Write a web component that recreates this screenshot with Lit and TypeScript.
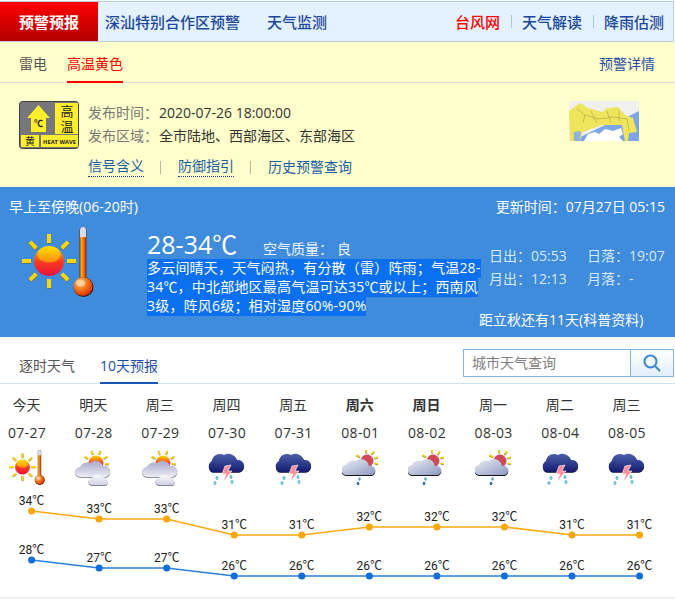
import { LitElement, html, css, svg } from 'lit';
import { customElement } from 'lit/decorators.js';

type Day = { week: string; date: string; icon: 'sun' | 'partly' | 'storm' | 'shower'; high: number; low: number; weekend?: boolean };

const days: Day[] = [
  { week: '今天', date: '07-27', icon: 'sun', high: 34, low: 28 },
  { week: '明天', date: '07-28', icon: 'partly', high: 33, low: 27 },
  { week: '周三', date: '07-29', icon: 'partly', high: 33, low: 27 },
  { week: '周四', date: '07-30', icon: 'storm', high: 31, low: 26 },
  { week: '周五', date: '07-31', icon: 'storm', high: 31, low: 26 },
  { week: '周六', date: '08-01', icon: 'shower', high: 32, low: 26, weekend: true },
  { week: '周日', date: '08-02', icon: 'shower', high: 32, low: 26, weekend: true },
  { week: '周一', date: '08-03', icon: 'shower', high: 32, low: 26 },
  { week: '周二', date: '08-04', icon: 'storm', high: 31, low: 26 },
  { week: '周三', date: '08-05', icon: 'storm', high: 31, low: 26 },
];

const rays = (cx: number, cy: number, r1: number, r2: number, w: number, angles: number[]) =>
  angles.map(a => {
    const t = (a * Math.PI) / 180;
    return svg`
      <line x1=${cx + Math.cos(t) * r1} y1=${cy + Math.sin(t) * r1 + 0.5} x2=${cx + Math.cos(t) * r2} y2=${cy + Math.sin(t) * r2 + 0.5} stroke="#6b5a10" stroke-width=${w} />
      <line x1=${cx + Math.cos(t) * r1} y1=${cy + Math.sin(t) * r1} x2=${cx + Math.cos(t) * r2} y2=${cy + Math.sin(t) * r2} stroke="#ffd60a" stroke-width=${w} />`;
  });

const sunThermo = (size: number) => html`
  <svg class="icon" width=${size} height=${size} viewBox="0 0 72 72">
    ${rays(27, 34, 18, 27, 4, [0, 45, 90, 135, 180, 225, 270, 315])}
    <circle cx="27" cy="34" r="15" fill="url(#sunFill)" />
    <ellipse cx="27" cy="27.500" rx="11.500" ry="8" fill="url(#sunGlow)" />
    <rect x="57.5" y="0" width="7" height="54" rx="3.5" fill="#5b3a12" />
    <rect x="58" y="0" width="6" height="12" rx="3" fill="#d9dcec" />
    <rect x="58.5" y="10" width="5" height="44" fill="url(#tubeFill)" />
    <circle cx="61.5" cy="60" r="10" fill="#3a1c05" />
    <circle cx="61" cy="59.5" r="9.5" fill="url(#bulbFill)" />
    <ellipse cx="58.5" cy="56" rx="4.5" ry="3.5" fill="#ffd9a8" opacity=".8" />
  </svg>`;

const partly = () => html`
  <svg class="icon" width="36" height="36" viewBox="0 0 36 36">
    ${rays(21, 13, 9, 13, 1.6, [-150, -110, -70, -30, 5])}
    <circle cx="21" cy="13" r="7.5" fill="url(#sunFill)" />
    <path d="M5 27a5 5 0 0 1 0-10a8 8 0 0 1 10-4a8 8 0 0 1 13 3a5.500 5.500 0 0 1 3 11z" fill="#6d6d80" transform="translate(0 .8)" />
    <path d="M5 27a5 5 0 0 1 0-10a8 8 0 0 1 10-4a8 8 0 0 1 13 3a5.500 5.500 0 0 1 3 11z" fill="url(#cloudFill)" />
    <path d="M17 35a3.500 3.500 0 0 1 0-7a6 6 0 0 1 10-1a5 5 0 0 1 5 3.500a3 3 0 0 1-1 4.500z" fill="#5d5d70" transform="translate(0 .8)" />
    <path d="M17 35a3.500 3.500 0 0 1 0-7a6 6 0 0 1 10-1a5 5 0 0 1 5 3.500a3 3 0 0 1-1 4.500z" fill="url(#smallCloud)" />
  </svg>`;

const storm = () => html`
  <svg class="icon" width="38" height="36" viewBox="0 0 38 36">
    <path d="M6 22a6 6 0 0 1-1-11a8 8 0 0 1 12-6a9 9 0 0 1 13 5a6 6 0 0 1 2 12z" fill="#070b33" transform="translate(0 .8)" />
    <path d="M6 22a6 6 0 0 1-1-11a8 8 0 0 1 12-6a9 9 0 0 1 13 5a6 6 0 0 1 2 12z" fill="url(#stormFill)" />
    <path d="M18 16l6-1l-3 6h4l-9 11l3-8h-4z" fill="#ff8f9a" stroke="#fff" stroke-width=".6" />
    <g fill="#6cc0d8">
      <ellipse cx="10" cy="28" rx="1.500" ry="2" /><ellipse cx="8" cy="33" rx="1.500" ry="2" />
      <ellipse cx="24" cy="27" rx="1.500" ry="2" /><ellipse cx="25" cy="32" rx="1.500" ry="2" />
    </g>
  </svg>`;

const shower = () => html`
  <svg class="icon" width="36" height="36" viewBox="0 0 36 36">
    ${rays(25, 11, 8, 12, 1.6, [-150, -95, -55, -20, 15])}
    <circle cx="25" cy="11" r="6.500" fill="#cf4a58" />
    <path d="M5 25a5 5 0 0 1-1-10a8 8 0 0 1 10-4a8 8 0 0 1 13 5a4.500 4.500 0 0 1 3 9z" fill="#15151f" transform="translate(0 1)" />
    <path d="M5 25a5 5 0 0 1-1-10a8 8 0 0 1 10-4a8 8 0 0 1 13 5a4.500 4.500 0 0 1 3 9z" fill="url(#showerFill)" />
    <ellipse cx="17.500" cy="29" rx="1.300" ry="1.800" fill="#5aa8c8" /><ellipse cx="16" cy="33.500" rx="1.300" ry="1.800" fill="#2d6e92" />
  </svg>`;

const dayIcon = (d: Day) => {
  if (d.icon === 'sun') return sunThermo(36);
  if (d.icon === 'partly') return partly();
  if (d.icon === 'storm') return storm();
  return shower();
};

@customElement('app-root')
export class AppRoot extends LitElement {
  static styles = css`
    :host {
      display: block;
      width: 675px;
      height: 599px;
      overflow: hidden;
      background: #fff;
      font-family: "Open Sans", "Noto Sans CJK SC", sans-serif;
      font-size: 14px;
      color: #333;
    }
    .defs { display: block; width: 0; height: 0; }
    .icon { display: block; }

    .topbar {
      display: flex;
      align-items: center;
      height: 39px;
      margin-top: 1px;
      margin-right: 1px;
      border: 1px solid #b9cde6;
      border-left: 0;
      background: #e4f2ff;
      font-size: 15px;
      font-weight: 500;
      color: #1b479c;
    }
    .topbar .brand {
      width: 98px;
      align-self: stretch;
      display: flex;
      align-items: center;
      justify-content: center;
      color: #fff;
      font-weight: 700;
      background: linear-gradient(#ff0000, #b30000);
    }
    .topbar .left { margin-left: 7px; display: flex; gap: 27px; }
    .topbar .right { margin-left: auto; margin-right: 9px; display: flex; align-items: center; }
    .topbar .red { color: #ff0000; }
    .topbar .sep { width: 1px; height: 13px; background: #a9c4e2; margin: 0 10px 0 11px; }

    .alert { background: #ffffcb; height: 145px; }
    .alert-tabs {
      display: flex;
      padding: 0 20px 0 19px;
      gap: 20px;
      border-bottom: 1px solid #d5dce6;
      box-sizing: border-box;
      height: 41px;
      color: #555;
    }
    .alert-tabs span { line-height: 43px; height: 41px; box-sizing: border-box; }
    .alert-tabs .on { color: #f00; border-bottom: 2px solid #f00; }
    .alert-tabs .more { margin-left: auto; color: #2c4da6; }

    .alert-body { display: flex; padding: 18px 36px 0 19px; }
    .badge { flex: none; margin-right: 9px; }
    .alert-info { flex: 1; }
    .row { display: flex; height: 23px; line-height: 23px; color: #333; }
    .row label { width: 71px; color: #777; }
    .links { display: flex; align-items: center; margin-top: 9px; height: 22px; color: #1c5da8; }
    .links a { border-bottom: 1px dotted #123f9c; line-height: 18px; height: 19px; }
    .links span.plain { line-height: 18px; }
    .links i { width: 1px; height: 13px; background: #b9b9a6; margin: 0 17px 0 16px; }
    .map { flex: none; }

    .now {
      background: #3f8bdc;
      height: 150px;
      color: #fff;
      box-sizing: border-box;
      padding: 10px 10px 0 9px;
      display: grid;
      grid-template-columns: 138px 1fr;
      grid-template-rows: 20px 1fr;
    }
    .now-head { grid-column: 1 / 3; display: flex; justify-content: space-between; line-height: 20px; }
    .now-icon { padding: 10px 0 0 13px; }
    .now-main { display: flex; }
    .now-text { width: 342px; padding-top: 11px; }
    .temp { display: flex; align-items: baseline; height: 32px; line-height: 32px; }
    .temp b { font-size: 25px; font-weight: 400; width: 116px; }
    .temp span { width: 74px; color: #eef5fd; }
    .desc { margin-top: -1px; white-space: nowrap; display: flex; flex-direction: column; align-items: flex-start; letter-spacing: .2px; }
    .desc span { display: block; height: 19px; line-height: 18px; background: #0b70f0; }
    .now-side { flex: 1; padding-top: 27px; color: #d8e9fb; white-space: nowrap; }
    .sun-row { display: grid; grid-template-columns: 98px 1fr; line-height: 23px; }
    .solar { margin: 20px 0 0 -10px; color: #fff; line-height: 20px; }

    .tabs {
      display: flex;
      align-items: stretch;
      height: 47px;
      box-sizing: border-box;
      border-bottom: 1px solid #cfe0f2;
      padding: 0 1px 0 19px;
      gap: 25px;
      color: #555;
    }
    .tabs span { line-height: 58px; height: 47px; box-sizing: border-box; }
    .tabs .on { color: #1b4ea6; border-bottom: 2px solid #1857b5; }
    .search { margin-left: auto; margin-top: 12px; display: flex; height: 28px; width: 211px; box-sizing: border-box; border: 1px solid #7db4ea; }
    .search .box { flex: 1; line-height: 26px; padding-left: 8px; color: #808080; border-right: 1px solid #7db4ea; }
    .search .btn { width: 42px; display: flex; align-items: center; justify-content: center; background: linear-gradient(#fff, #e2effc); }

    .grid {
      display: grid;
      grid-template-columns: repeat(10, 53px);
      column-gap: 13.67px;
      padding-top: 11px;
      text-align: center;
      color: #333;
    }
    .week { line-height: 20px; }
    .week.weekend { font-weight: 700; }
    .date { line-height: 20px; margin-top: 8px; letter-spacing: .3px; padding-left: 1px; }
    .cell-icon { display: flex; justify-content: center; height: 36px; margin-top: 7px; }

    .chart { display: block; margin-top: 4px; }
    .chart text { font-family: Roboto, "Noto Sans CJK SC", sans-serif; font-size: 12px; fill: #222; text-anchor: middle; }
    .foot { height: 2px; background: #f0f0f0; }
  `;

  private chart() {
    const x = (i: number) => 31.6 + i * 67.55;
    const hy = (t: number) => 511 - 490 + (34 - t) * 8;
    const ly = (t: number) => 560 - 490 + (28 - t) * 8;
    const series = (key: 'high' | 'low', y: (t: number) => number, color: string, dot: string) => svg`
      <polyline fill="none" stroke=${color} stroke-width="1.6" points=${days.map((d, i) => `${x(i)},${y(d[key])}`).join(' ')} />
      ${days.map((d, i) => svg`
        <circle cx=${x(i)} cy=${y(d[key])} r="3.500" fill=${dot} />
        <text x=${x(i)} y=${y(d[key]) - 6}>${d[key]}℃</text>`)}`;
    return html`
      <svg class="chart" width="675" height="107" viewBox="0 0 675 107">
        ${series('high', hy, '#ffa914', '#ffa500')}
        ${series('low', ly, '#2c7fdc', '#0f6fd8')}
      </svg>`;
  }

  render() {
    return html`
      <svg class="defs" width="0" height="0">
        <defs>
          <linearGradient id="sunFill" x1="0" y1="0" x2="0" y2="1">
            <stop offset="0" stop-color="#ffdc00" /><stop offset=".5" stop-color="#fb3f1e" /><stop offset="1" stop-color="#e80f3c" />
          </linearGradient>
          <linearGradient id="sunGlow" x1="0" y1="0" x2="0" y2="1">
            <stop offset="0" stop-color="#ffdf00" /><stop offset="1" stop-color="#ff8a10" />
          </linearGradient>
          <linearGradient id="tubeFill" x1="0" y1="0" x2="1" y2="0">
            <stop offset="0" stop-color="#ffc21a" /><stop offset="1" stop-color="#e83a12" />
          </linearGradient>
          <radialGradient id="bulbFill" cx=".35" cy=".3" r=".8">
            <stop offset="0" stop-color="#ffc070" /><stop offset=".55" stop-color="#f06a10" /><stop offset="1" stop-color="#d8200c" />
          </radialGradient>
          <linearGradient id="cloudFill" x1="0" y1="0" x2="0" y2="1">
            <stop offset="0" stop-color="#a9a9cc" /><stop offset=".6" stop-color="#cfcfe2" /><stop offset="1" stop-color="#eeeef5" />
          </linearGradient>
          <linearGradient id="smallCloud" x1="0" y1="0" x2="0" y2="1">
            <stop offset="0" stop-color="#fafafd" /><stop offset="1" stop-color="#d0d0e4" />
          </linearGradient>
          <linearGradient id="stormFill" x1="0" y1="0" x2="0" y2="1">
            <stop offset="0" stop-color="#4c5fa8" /><stop offset="1" stop-color="#141c70" />
          </linearGradient>
          <linearGradient id="showerFill" x1="0" y1="0" x2="1" y2="1">
            <stop offset="0" stop-color="#eceef6" /><stop offset="1" stop-color="#8d98c0" />
          </linearGradient>
        </defs>
      </svg>

      <div class="topbar">
        <div class="brand">预警预报</div>
        <div class="left"><span>深汕特别合作区预警</span><span>天气监测</span></div>
        <div class="right">
          <span class="red">台风网</span><i class="sep"></i><span>天气解读</span><i class="sep"></i><span>降雨估测</span>
        </div>
      </div>

      <section class="alert">
        <div class="alert-tabs">
          <span>雷电</span><span class="on">高温黄色</span><span class="more">预警详情</span>
        </div>
        <div class="alert-body">
          <svg class="badge" width="60" height="48" viewBox="0 0 60 48">
            <rect x=".5" y=".5" width="59" height="47" rx="3" fill="#77767a" stroke="#3f3f3f" />
            <path d="M19.500 4L31 17H27V31H12V17H8Z" fill="#ffee2e" />
            <text x="19.500" y="26" font-size="9" font-weight="700" text-anchor="middle" fill="#222">℃</text>
            <rect x="36" y="2" width="23" height="31" fill="#ffee2e" />
            <text x="47.500" y="4" font-size="13" letter-spacing="2" writing-mode="vertical-rl" fill="#222">高温</text>
            <rect x="2" y="34" width="18" height="12" fill="#ffee2e" />
            <text x="11" y="44" font-size="10" text-anchor="middle" fill="#222">黄</text>
            <rect x="22" y="34" width="37" height="12" fill="#ffee2e" />
            <text x="40.500" y="43" font-size="6" font-weight="700" text-anchor="middle" textLength="33" lengthAdjust="spacingAndGlyphs" fill="#222">HEAT WAVE</text>
          </svg>
          <div class="alert-info">
            <div class="row"><label>发布时间：</label><span>2020-07-26 18:00:00</span></div>
            <div class="row"><label>发布区域：</label><span>全市陆地、西部海区、东部海区</span></div>
            <div class="links">
              <a>信号含义</a><i></i><a>防御指引</a><i></i><span class="plain">历史预警查询</span>
            </div>
          </div>
          <svg class="map" width="70" height="40" viewBox="0 0 70 40">
            <rect width="70" height="40" fill="#f0f0f0" />
            <path d="M70 10L58 16L36 24L3 40H70Z" fill="#7ba7e6" />
            <path d="M15 40L19 33L26 31L30 33L36 28L44 30L52 27L54 33L50 36L54 40Z" fill="#fff" />
            <path d="M0 10L11 2L19 7L33 11L38 7L49 6L56 14L64 17L68 31L60 32L59 40H56L53 24L33 24L14 31L11 40H1Z" fill="#efe55c" />
            <path d="M5 40L4.500 31L12 30L11 40Z" fill="#8fb2e0" />
            <path d="M8 8L16 14L14 22M22 10L28 22M38 10L42 22M50 10L50 20M58 18L60 30M30 18L44 16M16 14L30 18M44 16L58 18" stroke="#9c9440" stroke-width=".5" fill="none" />
          </svg>
        </div>
      </section>

      <section class="now">
        <div class="now-head"><span>早上至傍晚(06-20时)</span><span>更新时间：07月27日 05:15</span></div>
        <div class="now-icon">${sunThermo(72)}</div>
        <div class="now-main">
          <div class="now-text">
            <div class="temp"><b>28-34℃</b><span>空气质量：</span><span>良</span></div>
            <div class="desc">
              <span>多云间晴天，天气闷热，有分散（雷）阵雨；气温28-</span>
              <span>34℃，中北部地区最高气温可达35℃或以上；西南风</span>
              <span>3级，阵风6级；相对湿度60%-90%</span>
            </div>
          </div>
          <div class="now-side">
            <div class="sun-row"><span>日出：05:53</span><span>日落：19:07</span></div>
            <div class="sun-row"><span>月出：12:13</span><span>月落：-</span></div>
            <div class="solar">距立秋还有11天(科普资料)</div>
          </div>
        </div>
      </section>

      <div class="tabs">
        <span>逐时天气</span><span class="on">10天预报</span>
        <div class="search">
          <div class="box">城市天气查询</div>
          <div class="btn">
            <svg width="18" height="18" viewBox="0 0 18 18" fill="none" stroke="#3a87cc" stroke-width="2">
              <circle cx="7.500" cy="7.500" r="6" /><path d="M12 12l5 5" />
            </svg>
          </div>
        </div>
      </div>

      <div class="grid">
        ${days.map(d => html`
          <div>
            <div class="week ${d.weekend ? 'weekend' : ''}">${d.week}</div>
            <div class="date">${d.date}</div>
            <div class="cell-icon">${dayIcon(d)}</div>
          </div>`)}
      </div>
      ${this.chart()}
      <div class="foot"></div>
    `;
  }
}
